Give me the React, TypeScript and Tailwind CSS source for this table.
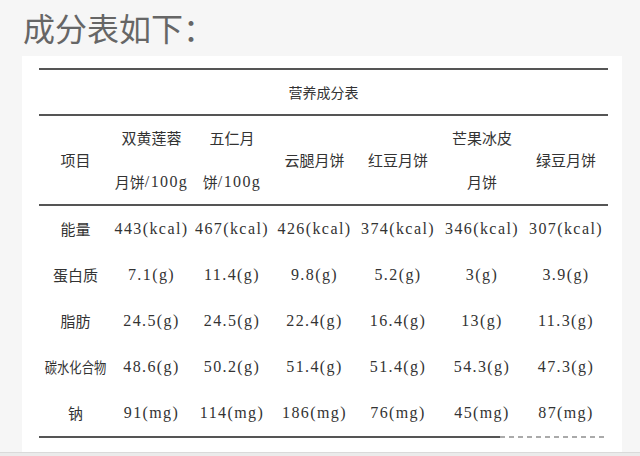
const COLS = "grid grid-cols-[73px_79px_82px_83px_84px_84px_84px]";
const CJK = "font-['Noto_Sans_CJK_SC',sans-serif]";
const NUM = "font-['Liberation_Serif','Noto_Sans_CJK_SC',serif] text-[16px] tracking-[1.4px]";

type Row = { label: string; squeeze?: boolean; values: string[] };

const ROWS: Row[] = [
  { label: "能量", values: ["443(kcal)", "467(kcal)", "426(kcal)", "374(kcal)", "346(kcal)", "307(kcal)"] },
  { label: "蛋白质", values: ["7.1(g)", "11.4(g)", "9.8(g)", "5.2(g)", "3(g)", "3.9(g)"] },
  { label: "脂肪", values: ["24.5(g)", "24.5(g)", "22.4(g)", "16.4(g)", "13(g)", "11.3(g)"] },
  { label: "碳水化合物", squeeze: true, values: ["48.6(g)", "50.2(g)", "51.4(g)", "51.4(g)", "54.3(g)", "47.3(g)"] },
  { label: "钠", values: ["91(mg)", "114(mg)", "186(mg)", "76(mg)", "45(mg)", "87(mg)"] },
];

function Rule() {
  return <div className="h-[2px] bg-[#555]" />;
}

function HeaderCell({ top, bottom }: { top: React.ReactNode; bottom?: React.ReactNode }) {
  if (!bottom) {
    return <div className="flex items-center justify-center">{top}</div>;
  }
  return (
    <div className="flex flex-col items-center">
      <div className="h-[44px] flex items-center">{top}</div>
      <div className="h-[44px] flex items-center">{bottom}</div>
    </div>
  );
}

function Per100({ prefix }: { prefix: string }) {
  return (
    <span className="flex items-center">
      <span>{prefix}</span>
      <span className={NUM}>/100g</span>
    </span>
  );
}

export default function App() {
  return (
    <div className={`h-[456px] w-[640px] overflow-hidden bg-[#f6f6f6] flex flex-col ${CJK}`}>
      {/* Title */}
      <h1 className="h-[56px] pl-[23px] pt-[11px] text-[32px] leading-none text-[#666]">成分表如下：</h1>

      {/* Card */}
      <div className="ml-[22px] w-[600px] h-[396px] bg-white pt-[12px] pl-[17px]">
        <div className="w-[569px] text-[#333] text-[15px]">
          <Rule />
          <div className="h-[44px] flex items-center justify-center text-[14px]">营养成分表</div>
          <Rule />

          <div className={`${COLS} h-[88px]`}>
            <HeaderCell top="项目" />
            <HeaderCell top="双黄莲蓉" bottom={<Per100 prefix="月饼" />} />
            <HeaderCell top="五仁月" bottom={<Per100 prefix="饼" />} />
            <HeaderCell top="云腿月饼" />
            <HeaderCell top="红豆月饼" />
            <HeaderCell top="芒果冰皮" bottom="月饼" />
            <HeaderCell top="绿豆月饼" />
          </div>
          <Rule />

          {ROWS.map((row) => (
            <div key={row.label} className={`${COLS} h-[46px] items-center`}>
              <div className="flex justify-center">
                <span className={row.squeeze ? "inline-block whitespace-nowrap scale-x-[0.82]" : ""}>{row.label}</span>
              </div>
              {row.values.map((v, i) => (
                <div key={i} className={`text-center ${NUM}`}>
                  {v}
                </div>
              ))}
            </div>
          ))}

          {/* bottom rule, right end broken by a faint watermark */}
          <div className="flex items-center h-[2px]">
            <div className="w-[461px] h-[2px] bg-[#555]" />
            <div className="flex-1 h-[2px] bg-[repeating-linear-gradient(90deg,#aaa_0_5px,transparent_5px_9px)]" />
          </div>
        </div>
      </div>

      <div className="flex-1 border-t border-[#dadada] bg-[#ebebeb]" />
    </div>
  );
}
